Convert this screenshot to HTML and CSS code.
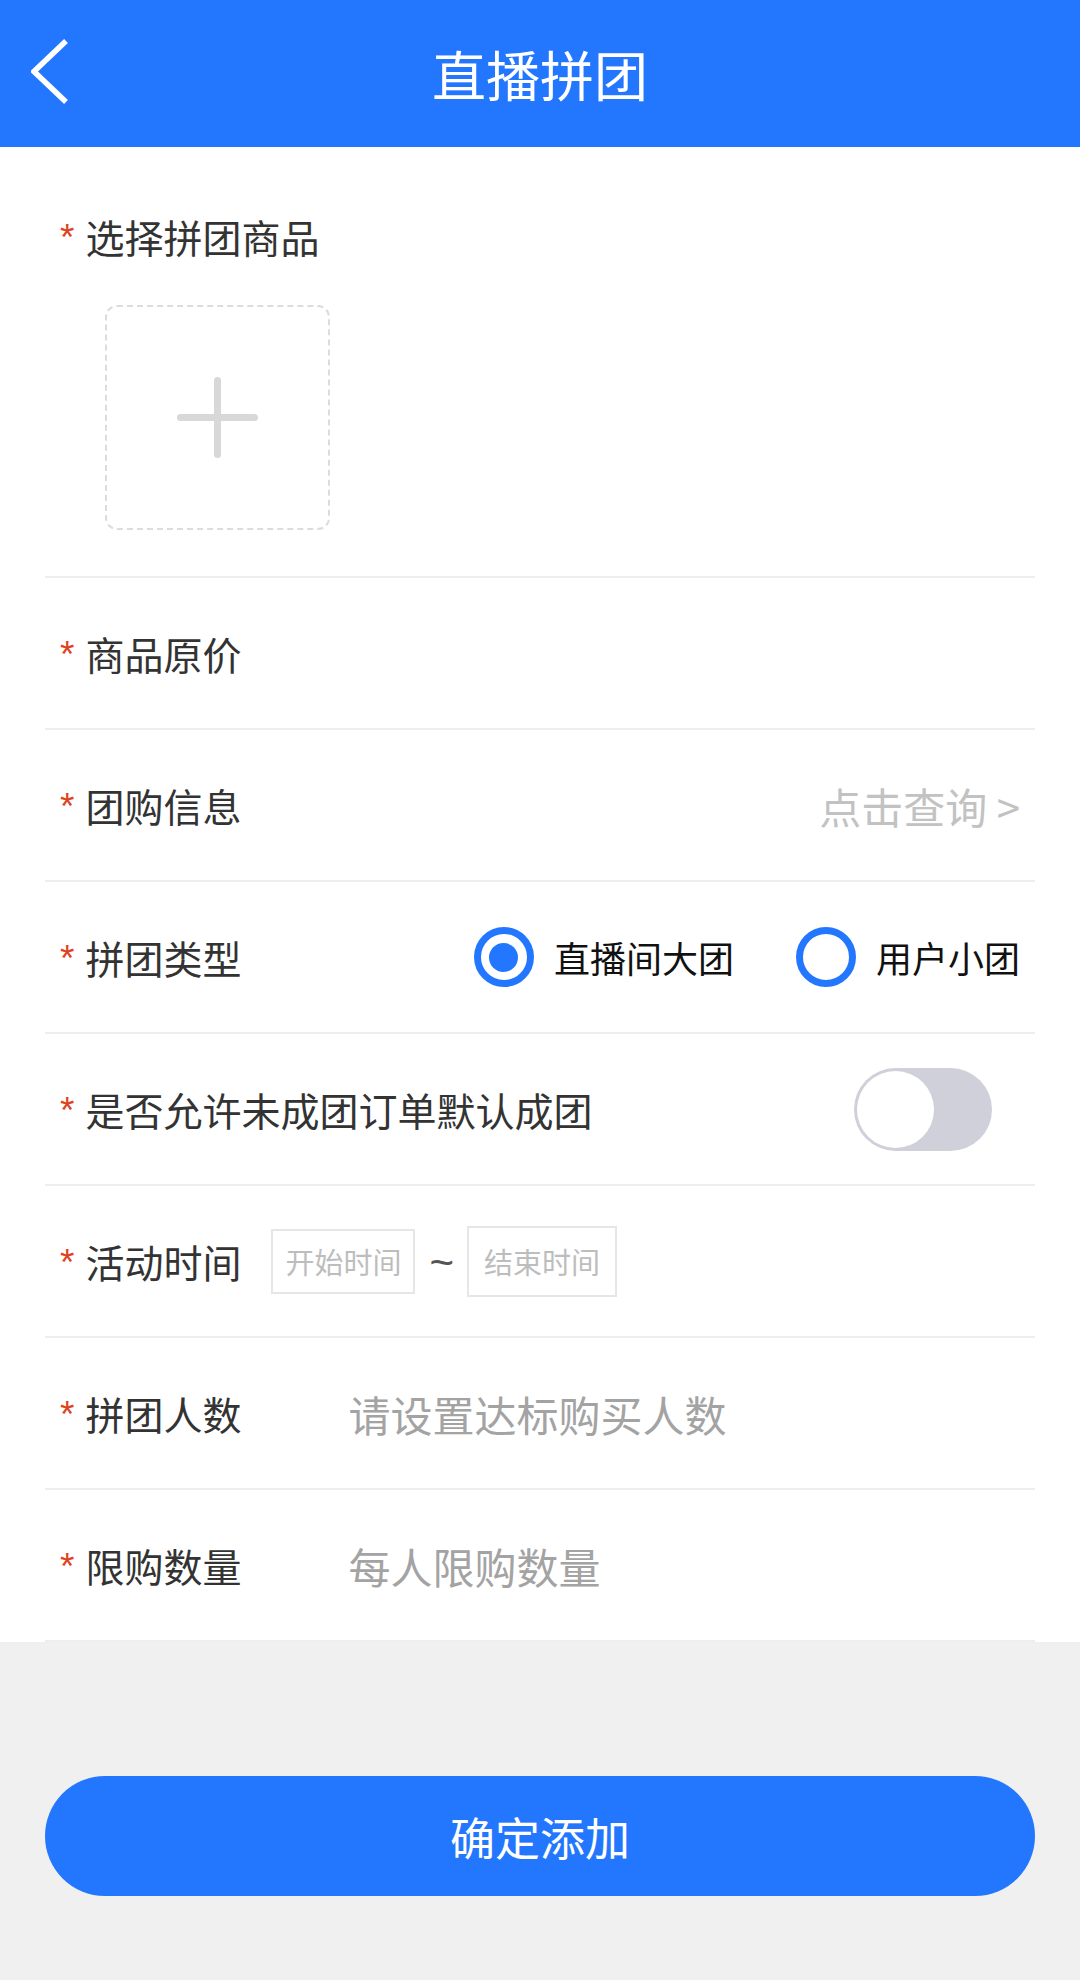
FILE: index.html
```html
<!DOCTYPE html>
<html lang="zh-CN">
<head>
<meta charset="utf-8">
<title>直播拼团</title>
<link rel="stylesheet" href="styles.css">
</head>
<body>
<header class="nav">
  <svg class="back" width="40" height="66" viewBox="0 0 40 66" aria-hidden="true">
    <polyline points="35,2 3,32.5 35,63" fill="none" stroke="#fff" stroke-width="5.5" stroke-linejoin="miter"/>
  </svg>
  <h1 class="title">直播拼团</h1>
</header>

<main class="form">
  <section class="field-upload">
    <div class="label"><span class="req">*</span>选择拼团商品</div>
    <div class="upload"><span class="plus"></span></div>
  </section>

  <div class="row">
    <div class="label"><span class="req">*</span>商品原价</div>
  </div>

  <div class="row">
    <div class="label"><span class="req">*</span>团购信息</div>
    <div class="link">点击查询 &gt;</div>
  </div>

  <div class="row">
    <div class="label"><span class="req">*</span>拼团类型</div>
    <div class="radios">
      <div class="radio checked"><span class="dot"></span><span class="radio-text">直播间大团</span></div>
      <div class="radio"><span class="dot"></span><span class="radio-text">用户小团</span></div>
    </div>
  </div>

  <div class="row">
    <div class="label"><span class="req">*</span>是否允许未成团订单默认成团</div>
    <div class="switch"><span class="knob"></span></div>
  </div>

  <div class="row">
    <div class="label"><span class="req">*</span>活动时间</div>
    <div class="times">
      <div class="time-box start">开始时间</div>
      <span class="tilde">~</span>
      <div class="time-box end">结束时间</div>
    </div>
  </div>

  <div class="row">
    <div class="label"><span class="req">*</span>拼团人数</div>
    <div class="placeholder">请设置达标购买人数</div>
  </div>

  <div class="row">
    <div class="label"><span class="req">*</span>限购数量</div>
    <div class="placeholder">每人限购数量</div>
  </div>
</main>

<footer class="footer">
  <button class="submit" type="button">确定添加</button>
</footer>
</body>
</html>
```

FILE: styles.css
```css
* { box-sizing: border-box; }

html, body {
  margin: 0;
  padding: 0;
}

body {
  width: 1080px;
  min-height: 1980px;
  background: #f0f0f0;
  font-family: "Noto Sans CJK SC", "Noto Sans", sans-serif;
  color: #333;
}

.nav {
  position: relative;
  height: 147px;
  background: #2377fe;
  display: flex;
  align-items: center;
  justify-content: center;
}

.back {
  position: absolute;
  left: 31px;
  top: 39px;
}

.title {
  margin: 0;
  font-size: 54px;
  font-weight: 400;
  color: #fff;
  line-height: 1;
}

.form {
  background: #fff;
  padding: 0 45px;
}

.field-upload {
  height: 431px;
  padding: 70px 15px 0;
  border-bottom: 2px solid #eeeeee;
}

.label {
  display: flex;
  align-items: center;
  font-size: 39px;
  line-height: 39px;
  color: #333;
  white-space: nowrap;
}

.req {
  color: #dd4424;
  font-family: "Liberation Sans", sans-serif;
  font-size: 37px;
  line-height: 1;
  margin-right: 11px;
  position: relative;
  top: 1px;
}

.upload {
  margin: 49px 0 0 45px;
  width: 225px;
  height: 225px;
  border: 2px dashed #dcdcdc;
  border-radius: 12px;
  display: flex;
  align-items: center;
  justify-content: center;
}

.plus {
  position: relative;
  width: 81px;
  height: 81px;
}

.plus::before,
.plus::after {
  content: "";
  position: absolute;
  background: #d8d8d8;
  border-radius: 4px;
}

.plus::before {
  left: 0;
  top: 37px;
  width: 81px;
  height: 7px;
}

.plus::after {
  left: 37px;
  top: 0;
  width: 7px;
  height: 81px;
}

.row {
  height: 152px;
  padding: 0 15px;
  display: flex;
  align-items: center;
  border-bottom: 2px solid #eeeeee;
}

.link {
  margin-left: auto;
  font-size: 42px;
  color: #c2c2c2;
  white-space: nowrap;
}

.radios {
  margin-left: auto;
  display: flex;
  align-items: center;
  gap: 62px;
}

.radio {
  display: flex;
  align-items: center;
  gap: 20px;
}

.dot {
  width: 60px;
  height: 60px;
  border: 7px solid #2377fe;
  border-radius: 50%;
  display: flex;
  align-items: center;
  justify-content: center;
}

.radio.checked .dot::after {
  content: "";
  width: 29px;
  height: 29px;
  border-radius: 50%;
  background: #2377fe;
}

.radio-text {
  font-size: 36px;
  color: #111;
}

.switch {
  margin-left: auto;
  margin-right: 28px;
  width: 138px;
  height: 83px;
  border-radius: 42px;
  background: #d0d0da;
  padding: 3px;
}

.knob {
  display: block;
  width: 77px;
  height: 77px;
  border-radius: 50%;
  background: #fff;
}

.times {
  display: flex;
  align-items: center;
  margin-left: 30px;
}

.time-box {
  border: 2px solid #e6e6e6;
  color: #bdbdbd;
  font-size: 29px;
  display: flex;
  align-items: center;
  justify-content: center;
  white-space: nowrap;
}

.time-box.start {
  width: 144px;
  height: 65px;
}

.time-box.end {
  width: 150px;
  height: 71px;
}

.tilde {
  margin: 0 13px 0 14px;
  font-size: 42px;
  line-height: 1;
  color: #555;
  font-family: "Liberation Sans", sans-serif;
  position: relative;
  top: 2px;
}

.placeholder {
  margin-left: 107px;
  font-size: 42px;
  color: #a3a3a3;
  white-space: nowrap;
}

.footer {
  padding: 134px 45px 0;
}

.submit {
  display: block;
  width: 990px;
  height: 120px;
  border: none;
  border-radius: 60px;
  background: #2377fe;
  color: #fff;
  font-family: "Noto Sans CJK SC", "Noto Sans", sans-serif;
  font-size: 45px;
  padding: 0;
}
```
